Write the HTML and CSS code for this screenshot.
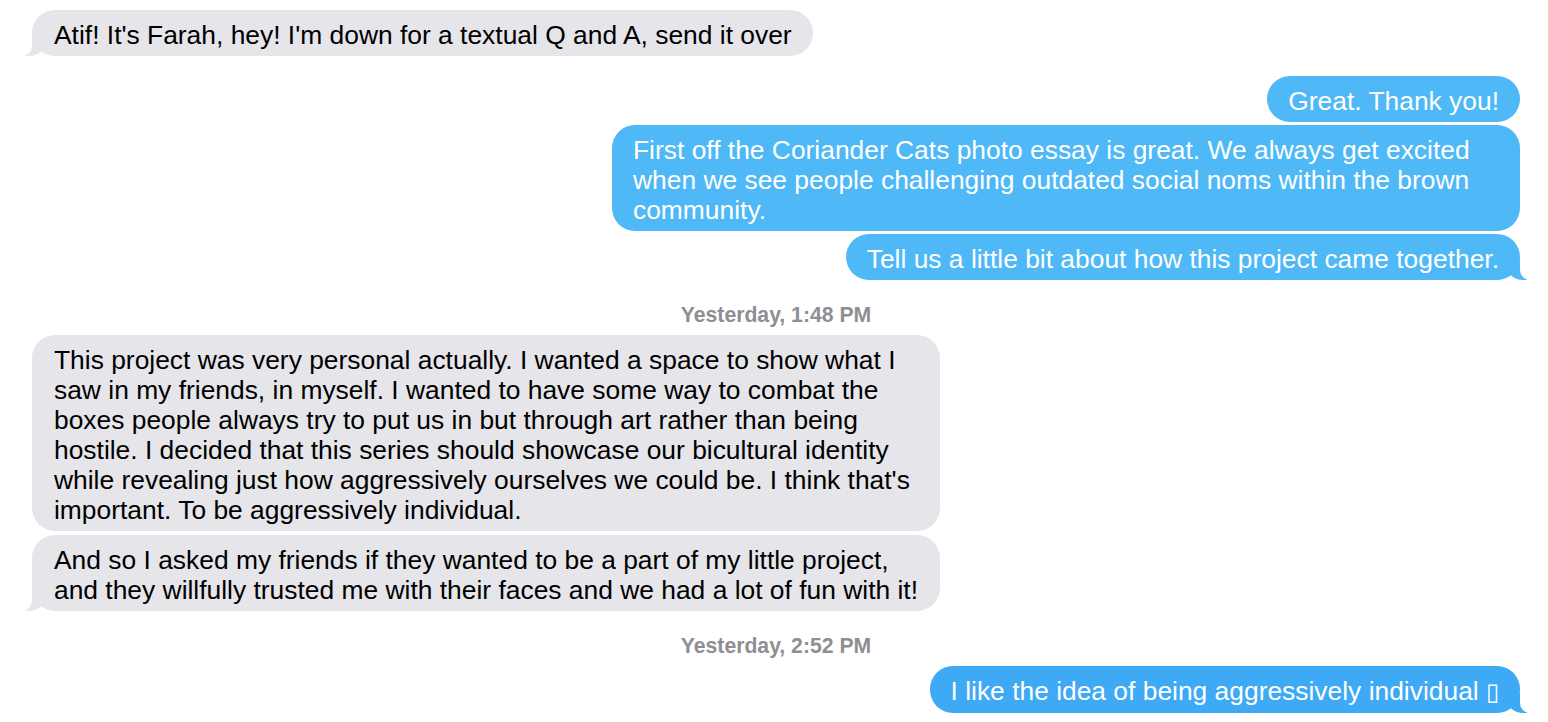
FILE: index.html
```html
<!DOCTYPE html>
<html>
<head>
<meta charset="utf-8">
<link rel="stylesheet" href="styles.css">
</head>
<body>
<div class="thread">
  <div class="bubble them tail first">Atif! It's Farah, hey! I'm down for a textual Q and A, send it over</div>

  <div class="bubble me group-start">Great. Thank you!</div>
  <div class="bubble me wide">First off the Coriander Cats photo essay is great. We always get excited<br>when we see people challenging outdated social noms within the brown<br>community.</div>
  <div class="bubble me tail">Tell us a little bit about how this project came together.</div>

  <div class="stamp">Yesterday, 1:48 PM</div>
  <div class="bubble them wide">This project was very personal actually. I wanted a space to show what I<br>saw in my friends, in myself. I wanted to have some way to combat the<br>boxes people always try to put us in but through art rather than being<br>hostile. I decided that this series should showcase our bicultural identity<br>while revealing just how aggressively ourselves we could be. I think that's<br>important. To be aggressively individual.</div>
  <div class="bubble them wide tail">And so I asked my friends if they wanted to be a part of my little project,<br>and they willfully trusted me with their faces and we had a lot of fun with it!</div>

  <div class="stamp">Yesterday, 2:52 PM</div>
  <div class="bubble me last tail">I like the idea of being aggressively individual <span class="tofu">&#x25AF;</span></div>
</div>
</body>
</html>
```
FILE: styles.css
```css
html, body {
  margin: 0;
  padding: 0;
  background: #ffffff;
}

body {
  font-family: "Liberation Sans", Arial, sans-serif;
  font-size: 26.4px;
}

.thread {
  display: flex;
  flex-direction: column;
  padding: 10px 28px 0 32px;
}

.bubble {
  position: relative;
  padding: 10px 21px 6px 21px;
  line-height: 30px;
  border-radius: 23px;
  white-space: nowrap;
  margin-top: 3px;
}

.wide {
  box-sizing: border-box;
  width: 908px;
}

.them {
  align-self: flex-start;
  background: #e5e5ea;
  color: #000000;
  margin-top: 4px;
  padding-left: 22px;
}

.first {
  margin-top: 0;
}

.me {
  align-self: flex-end;
  background: #4fb8f7;
  color: #ffffff;
}

.me.last {
  background: #3ea9f5;
}

.group-start {
  margin-top: 20px;
}

.stamp {
  align-self: center;
  margin: 23px 0 8px;
  color: #8e8e93;
  font-size: 21.2px;
  font-weight: bold;
  line-height: 24px;
}

.stamp + .bubble {
  margin-top: 0;
}

.tofu {
  font-size: 24px;
}

/* tails */
.tail::before,
.tail::after {
  content: "";
  position: absolute;
  bottom: 0;
  height: 20px;
}

.me.tail::before {
  right: -7px;
  width: 20px;
  background: inherit;
  border-bottom-left-radius: 16px 14px;
}

.me.tail::after {
  right: -26px;
  width: 26px;
  background: #ffffff;
  border-bottom-left-radius: 10px;
}

.them.tail::before {
  left: -7px;
  width: 20px;
  background: inherit;
  border-bottom-right-radius: 16px 14px;
}

.them.tail::after {
  left: -26px;
  width: 26px;
  background: #ffffff;
  border-bottom-right-radius: 10px;
}
```
